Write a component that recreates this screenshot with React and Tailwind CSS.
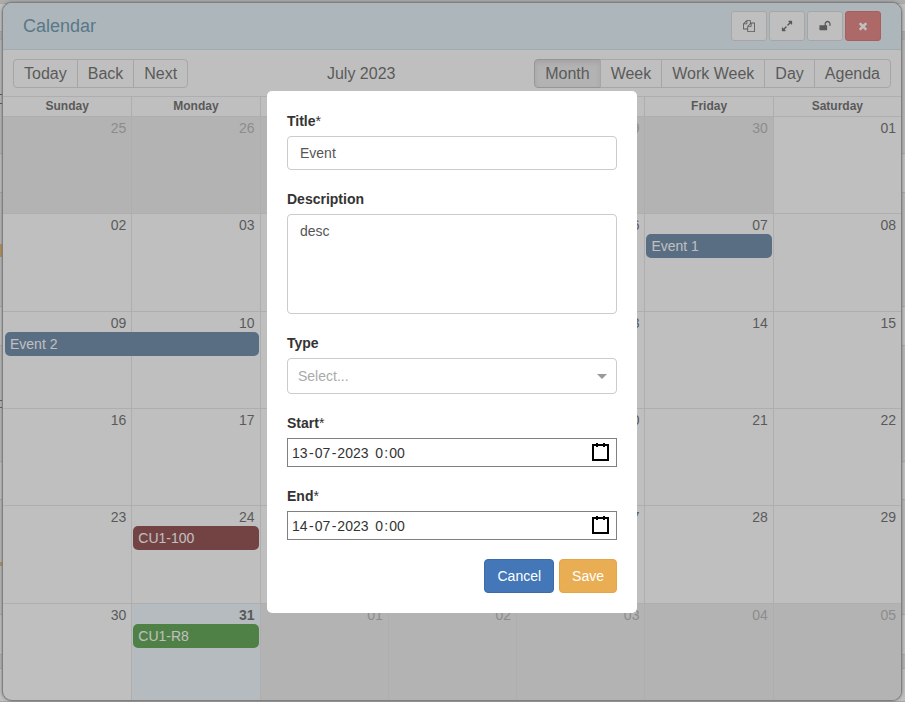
const FILES_PATH =
  'M1696 384q40 0 68 28t28 68v1216q0 40-28 68t-68 28h-960q-40 0-68-28t-28-68v-288h-544q-40 0-68-28t-28-68v-672q0-40 20-88t48-76l408-408q28-28 76-48t88-20h416q40 0 68 28t28 68v328q68-40 128-40h416zm-544 213l-299 299h299v-299zm-640-384l-299 299h299v-299zm196 647l316-316v-416h-384v416q0 40-28 68t-68 28h-416v640h512v-256q0-40 20-88t48-76zm956 804v-1152h-384v416q0 40-28 68t-68 28h-416v640h896z';
const EXPAND_PATH =
  'M883 1056q0 13-10 23l-332 332 144 144q19 19 19 45t-19 45-45 19h-448q-26 0-45-19t-19-45v-448q0-26 19-45t45-19 45 19l144 144 332-332q10-10 23-10t23 10l114 114q10 10 10 23zm781-864v448q0 26-19 45t-45 19-45-19l-144-144-332 332q-10 10-23 10t-23-10l-114-114q-10-10-10-23t10-23l332-332-144-144q-19-19-19-45t19-45 45-19h448q26 0 45 19t19 45z';
const UNLOCK_PATH =
  'M1728 576v256q0 26-19 45t-45 19h-64q-26 0-45-19t-19-45v-256q0-106-75-181t-181-75-181 75-75 181v192h96q40 0 68 28t28 68v576q0 40-28 68t-68 28h-960q-40 0-68-28t-28-68v-576q0-40 28-68t68-28h672v-192q0-185 131.5-316.5t316.5-131.5 316.5 131.5 131.5 316.5z';
const TIMES_PATH =
  'M1490 1322q0 40-28 68l-136 136q-28 28-68 28t-68-28l-294-294-294 294q-28 28-68 28t-68-28l-136-136q-28-28-28-68t28-68l294-294-294-294q-28-28-28-68t28-68l136-136q28-28 68-28t68 28l294 294 294-294q28-28 68-28t68 28l136 136q28 28 28 68t-28 68l-294 294 294 294q28 28 28 68z';

const WINDOW_ACTIONS = [
  { label: 'Copy', path: FILES_PATH },
  { label: 'Expand', path: EXPAND_PATH },
  { label: 'Unlock', path: UNLOCK_PATH },
  { label: 'Close', path: TIMES_PATH, danger: true },
];

const WEEKDAYS = ['Sunday', 'Monday', 'Tuesday', 'Wednesday', 'Thursday', 'Friday', 'Saturday'];

const WEEKS = [
  { days: ['25', '26', '27', '28', '29', '30', '01'], off: [0, 5] },
  {
    days: ['02', '03', '04', '05', '06', '07', '08'],
    event: { title: 'Event 1', className: 'col-start-6 bg-[#335b87]' },
  },
  {
    days: ['09', '10', '11', '12', '13', '14', '15'],
    event: { title: 'Event 2', className: 'col-start-1 col-span-2 bg-[#335b87]' },
  },
  { days: ['16', '17', '18', '19', '20', '21', '22'] },
  {
    days: ['23', '24', '25', '26', '27', '28', '29'],
    event: { title: 'CU1-100', className: 'col-start-2 bg-[#660606]' },
  },
  {
    days: ['30', '31', '01', '02', '03', '04', '05'],
    off: [2, 6],
    today: 1,
    event: { title: 'CU1-R8', className: 'col-start-2 bg-[#1e820e]' },
  },
];

// The dashboard behind the window: only its edges show
const BACKDROP_ROWS = [
  'h-1 bg-[#d8d8d8]',
  'h-7 bg-white',
  'h-2 bg-[#d8d8d8]',
  'h-[114px] bg-[#eee] pt-[54px]',
  'h-[39px] bg-white',
  'h-[114px] bg-[#eee] pt-[51px]',
  'h-[39px] bg-white',
  'h-[116px] bg-[#eee] pt-[54px]',
  'h-[38px] bg-white',
  'h-[115px] bg-[#eee] pt-[62px]',
  'h-10 bg-white',
  'h-3.5 bg-[#e6e6e6]',
  'flex-1 bg-white',
];
const BACKDROP_MARKS = {
  3: 'h-2.5 border-y border-[#333]',
  5: 'h-[13px] bg-[#e6a23c]',
  7: 'h-2 border-y border-[#445]',
  9: 'h-1 bg-[#e6a23c]',
};

function Backdrop() {
  return (
    <div className="flex h-full flex-col">
      {BACKDROP_ROWS.map((row, i) => (
        <div key={i} className={`border-b border-[#ccc] ${row}`}>
          {BACKDROP_MARKS[i] && <div className={`w-[3px] ${BACKDROP_MARKS[i]}`} />}
        </div>
      ))}
    </div>
  );
}

function ButtonGroup({ items, active }) {
  return (
    <div className="flex">
      {items.map((item) => (
        <button
          key={item}
          type="button"
          className={`-ml-px h-[29px] border px-2.5 text-base leading-none first:ml-0 first:rounded-l last:rounded-r ${
            item === active ? 'border-[#adadad] bg-[#e6e6e6] shadow-[inset_0_3px_5px_rgba(0,0,0,0.125)]' : 'border-[#ccc]'
          }`}
        >
          {item}
        </button>
      ))}
    </div>
  );
}

function WindowHeader() {
  return (
    <header className="flex h-[47px] shrink-0 items-center justify-between border-b border-[#bcd8e1] bg-[#d9edf7] px-5">
      <h1 className="text-lg text-[#31708f]">Calendar</h1>
      <div className="flex gap-0.5">
        {WINDOW_ACTIONS.map(({ label, path, danger }) => (
          <button
            key={label}
            type="button"
            aria-label={label}
            className={`flex h-[30px] w-9 items-center justify-center rounded-[3px] border ${
              danger ? 'border-[#d43f3a] bg-[#d9534f] text-white' : 'border-[#ccc] bg-white text-[#333]'
            }`}
          >
            <svg viewBox="0 0 1792 1792" className="size-3" fill="currentColor" aria-hidden="true">
              <path d={path} />
            </svg>
          </button>
        ))}
      </div>
    </header>
  );
}

function WeekRow({ week }) {
  const { days, off, today, event } = week;
  const isOff = (i) => off && i >= off[0] && i <= off[1];

  return (
    <div className="relative grid min-h-0 flex-1 grid-cols-7 border-t border-[#ddd] first:border-t-0">
      {days.map((day, i) => (
        <div
          key={i}
          className={`border-l border-[#ddd] pt-px pr-[5px] text-right text-sm leading-5 first:border-l-0 ${
            isOff(i) ? 'bg-[#e6e6e6] text-[#999]' : ''
          } ${i === today ? 'bg-[#eaf6ff] font-bold' : ''}`}
        >
          {day}
        </div>
      ))}
      {event && (
        <div className="absolute inset-x-0 top-5 grid grid-cols-7">
          <button
            type="button"
            className={`mr-px ml-0.5 h-6 truncate rounded-[5px] px-[5px] text-left text-sm text-white ${event.className}`}
          >
            {event.title}
          </button>
        </div>
      )}
    </div>
  );
}

function CalendarWindow() {
  return (
    <section className="absolute top-0.5 right-[3px] bottom-px left-0.5 flex flex-col overflow-hidden rounded-[10px] border border-[#808080] bg-white text-[#333] shadow-[0_0_3px_rgba(0,0,0,0.6)]">
      <WindowHeader />
      <div className="flex shrink-0 items-center justify-between px-2.5 pt-[9px] pb-2">
        <ButtonGroup items={['Today', 'Back', 'Next']} />
        <span className="text-base">July 2023</span>
        <ButtonGroup items={['Month', 'Week', 'Work Week', 'Day', 'Agenda']} active="Month" />
      </div>
      <div className="flex min-h-0 flex-1 flex-col border-t border-[#ddd]">
        <div className="grid shrink-0 grid-cols-7 border-b border-[#ddd]">
          {WEEKDAYS.map((name) => (
            <div key={name} className="border-l border-[#ddd] text-center text-xs leading-[19px] font-bold first:border-l-0">
              {name}
            </div>
          ))}
        </div>
        <div className="flex min-h-0 flex-1 flex-col">
          {WEEKS.map((week, i) => (
            <WeekRow key={i} week={week} />
          ))}
        </div>
      </div>
    </section>
  );
}

function Field({ label, htmlFor, required, children }) {
  return (
    <div className="flex flex-col gap-[5px]">
      <label htmlFor={htmlFor} className="text-sm font-bold">
        {label}
        {required && <span className="font-normal">*</span>}
      </label>
      {children}
    </div>
  );
}

function DateTimePicker({ id, day }) {
  return (
    <div className="flex h-[29px] items-center justify-between border border-[#808080] pr-1.5 pl-[3px] text-sm">
      <div className="flex items-center whitespace-pre">
        <input id={id} aria-label="Day" defaultValue={day} className="w-[18px] px-px" />
        <span>-</span>
        <input aria-label="Month" defaultValue="07" className="w-[18px] px-px" />
        <span>-</span>
        <input aria-label="Year" defaultValue="2023" className="w-[34px] px-px" />
        <span> </span>
        <input aria-label="Hour" defaultValue="0" className="w-[10px] px-px" />
        <span>:</span>
        <input aria-label="Minute" defaultValue="00" className="w-[18px] px-px" />
      </div>
      <button type="button" aria-label="Open calendar">
        <svg width="19" height="19" viewBox="0 0 19 19" fill="none" stroke="black" strokeWidth="2" aria-hidden="true">
          <rect x="2" y="2" width="15" height="15" />
          <line x1="6" x2="6" y1="0" y2="4" />
          <line x1="13" x2="13" y1="0" y2="4" />
        </svg>
      </button>
    </div>
  );
}

function EventModal() {
  return (
    <div className="absolute inset-0 flex items-center justify-center bg-[#808080]/50 pt-0.5 pr-px">
      <form role="dialog" className="flex w-[370px] flex-col gap-[19px] rounded-[5px] bg-white p-5 text-[#333]">
        <Field label="Title" htmlFor="title" required>
          <input id="title" defaultValue="Event" className="h-[34px] rounded border border-[#ccc] px-3 text-sm text-[#555]" />
        </Field>
        <Field label="Description" htmlFor="description">
          <textarea
            id="description"
            defaultValue="desc"
            className="h-[100px] resize-none rounded border border-[#ccc] px-3 py-1.5 text-sm text-[#555]"
          />
        </Field>
        <Field label="Type" htmlFor="type">
          <div className="relative">
            <select
              id="type"
              defaultValue=""
              className="block h-9 w-full appearance-none rounded border border-[#ccc] bg-white px-2.5 text-sm text-[#aaa]"
            >
              <option value="">Select...</option>
            </select>
            <svg viewBox="0 0 10 5" className="pointer-events-none absolute top-4 right-2.5 h-[5px] w-2.5" fill="#999" aria-hidden="true">
              <path d="M0 0h10L5 5z" />
            </svg>
          </div>
        </Field>
        <Field label="Start" htmlFor="start" required>
          <DateTimePicker id="start" day="13" />
        </Field>
        <Field label="End" htmlFor="end" required>
          <DateTimePicker id="end" day="14" />
        </Field>
        <div className="flex justify-end gap-[5px]">
          <button type="button" className="h-[34px] rounded border border-[#3a6da8] bg-[#4377b7] px-3 text-sm text-white">
            Cancel
          </button>
          <button type="button" className="h-[34px] rounded border border-[#e6a544] bg-[#e9ad53] px-3 text-sm text-white">
            Save
          </button>
        </div>
      </form>
    </div>
  );
}

export default function App() {
  return (
    <main className="relative h-screen overflow-hidden bg-[#e8e8e8] font-['Liberation_Sans',Arial,sans-serif]">
      <Backdrop />
      <CalendarWindow />
      <EventModal />
    </main>
  );
}
